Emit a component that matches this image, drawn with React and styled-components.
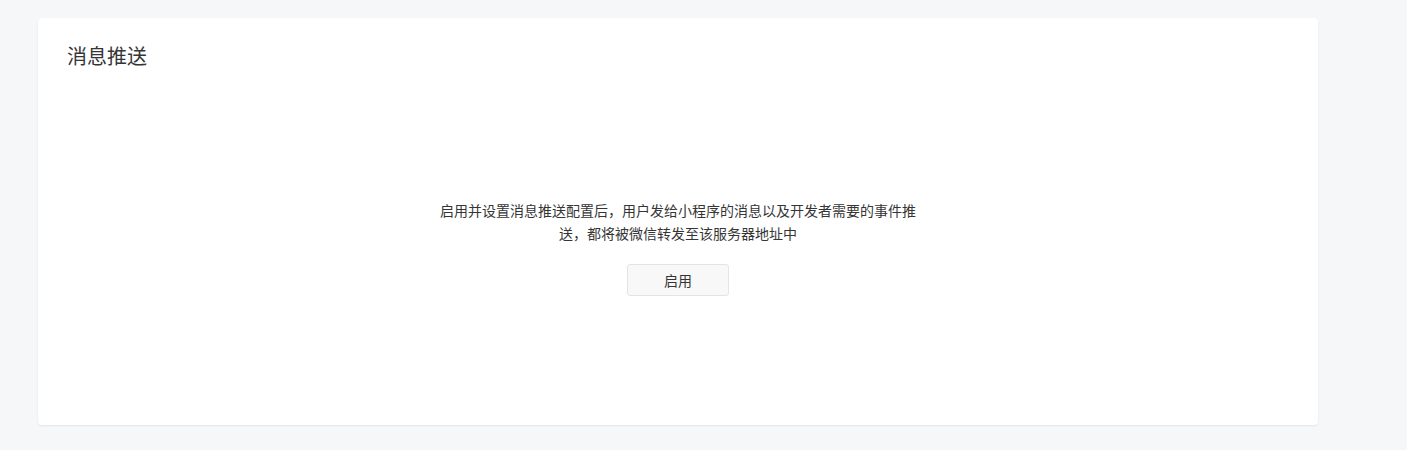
import React from 'react'
import { createGlobalStyle, styled } from 'styled-components'

const GlobalStyle = createGlobalStyle`
    html, body {
        margin: 0;
        padding: 0;
        background: #f6f7f9;
        font-family: 'Noto Sans CJK SC', 'Noto Sans', sans-serif;
        color: #353535;
    }
`

const Page = styled.main`
    padding: 18px 38px 24px;
`

const Card = styled.section`
    width: 1280px;
    height: 407px;
    box-sizing: border-box;
    background: #fff;
    border-radius: 4px;
    box-shadow: 0 1px 2px rgba(0, 0, 0, 0.08);
    padding: 24px 29px;
    display: flex;
    flex-direction: column;
`

const Title = styled.h2`
    margin: 0;
    font-size: 20px;
    line-height: 28px;
    font-weight: 400;
    color: #353535;
`

const Body = styled.div`
    display: flex;
    flex-direction: column;
    align-items: center;
    padding-top: 129px;
`

const Desc = styled.p`
    margin: 0;
    width: 480px;
    text-align: center;
    font-size: 14px;
    line-height: 23px;
    color: #353535;
    text-spacing-trim: space-all;
`

const Button = styled.button`
    margin-top: 19px;
    width: 102px;
    height: 32px;
    border: 1px solid #e4e4e4;
    border-radius: 3px;
    background: #f8f8f8;
    color: #353535;
    font-family: inherit;
    font-size: 14px;
    cursor: pointer;
`

export default function App() {
  return (
    <>
        <GlobalStyle />
        <Page>
            <Card>
                <Title>消息推送</Title>
                <Body>
                    <Desc>启用并设置消息推送配置后，用户发给小程序的消息以及开发者需要的事件推送，都将被微信转发至该服务器地址中</Desc>
                    <Button>启用</Button>
                </Body>
            </Card>
        </Page>
    </>
  )
}
